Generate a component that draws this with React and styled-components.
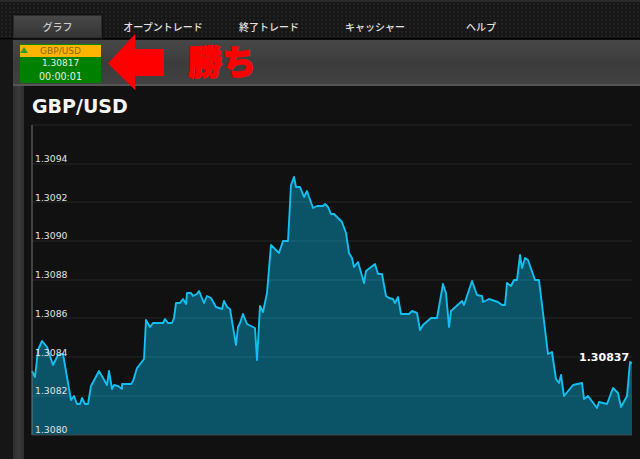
import React from "react";
import styled, { createGlobalStyle } from "styled-components";

const Global = createGlobalStyle`
  html, body { margin: 0; padding: 0; background: #111; }
  body { width: 640px; height: 459px; overflow: hidden; }
`;
const Page = styled.div`
  position: relative; width: 640px; height: 459px; overflow: hidden;
  display: flex; flex-direction: column; background: #111;
  font-family: "DejaVu Sans", sans-serif;
`;
const TopBar = styled.nav`
  height: 38px; box-sizing: border-box; padding: 15px 0 0 13px; display: flex; align-items: stretch;
  border-top: 2px solid #2a2a2a;
  background-color: #171717;
  background-image: radial-gradient(#232323 1px, transparent 1.2px);
  background-size: 4px 4px;
  border-bottom: 1px solid #000;
  margin-bottom: 1px;
  height: 39px;
`;
const Tab = styled.div`
  width: ${p => p.$w}px; margin-right: ${p => p.$gap || 0}px; flex: none; display: flex; align-items: center; justify-content: center;
  font: 500 10px "Noto Sans CJK JP", sans-serif; color: ${p => (p.$active ? "#ccc" : "#e2e2e2")};
  height: 23px; margin-top: -2px;
  ${p => p.$active && `
    background: linear-gradient(#484848, #343434);
    box-shadow: inset 0 0 0 1px #2b2b2b, 0 0 0 1px #111;
  `}
`;
const Main = styled.div`flex: 1; display: flex; min-height: 0;`;
const Gutter = styled.div`width: 13px; flex: none; background: #161616;`;
const Content = styled.div`flex: 1; display: flex; flex-direction: column; min-width: 0;`;
const Band = styled.div`
  height: 46px; flex: none; box-sizing: border-box; padding: 4px 0 0 7px; display: flex; align-items: flex-start;
  background: linear-gradient(#474747, #3c3c3c 55%, #414141);
  border-bottom: 2px solid #555;
`;
const Card = styled.div`width: 81px; flex: none; height: 39px; display: flex; flex-direction: column; background: #008000; border-top: 1px solid #0a8a0a; box-sizing: border-box;`;
const CardHead = styled.div`
  position: relative; height: 12px; background: #ffb400; color: #8a6a10; font-size: 9px; line-height: 13px; text-align: center;
`;
const UpMark = styled.span`
  position: absolute; left: 0; top: 2px; width: 0; height: 0;
  border-left: 4px solid transparent; border-right: 4px solid transparent; border-bottom: 6px solid #2f9f2f;
`;
const CardLine = styled.div`
  height: 13px; color: #e4efe4; font-size: ${p => p.$big ? 9.6 : 9}px; line-height: 13px; text-align: center;
`;
const Arrow = styled.svg`
  width: 56px; height: 56px; flex: none; margin: -10px 0 0 7px; position: relative; z-index: 2;
`;
const WinText = styled.div`
  margin: -4px 0 0 24px; font: 900 34px/42px "Noto Sans CJK JP", sans-serif; color: #f00;
  -webkit-text-stroke: 1.2px #f00; white-space: nowrap;
`;
const Body = styled.div`flex: 1; display: flex; min-height: 0;`;
const Strip = styled.div`width: 11px; flex: none; background: linear-gradient(90deg, #2c2c2c, #3a3a3a 50%, #2e2e2e);`;
const ChartPane = styled.div`flex: 1; display: flex; flex-direction: column; padding-left: 7px; min-width: 0;`;
const Title = styled.h1`
  margin: 0; height: 34px; font: 700 19px/40px "DejaVu Sans", sans-serif; color: #f4f4f4; padding-left: 1px; white-space: nowrap;
`;
const Chart = styled.svg`display: block; width: 609px; height: 339px; flex: none;`;
const AxisLabel = styled.text`font: 9.3px "DejaVu Sans", sans-serif; fill: #e2e2e2;`;
const LastPrice = styled.text`font: 700 11px "DejaVu Sans", sans-serif; fill: #fff;`;

const TABS = [["グラフ", 89, 8, true], ["オープントレード", 106], ["終了トレード", 106], ["キャッシャー", 106], ["ヘルプ", 106]];
const pts = [[32,371],[35,377],[38,350],[42,341],[47,347],[53,365],[58,355],[63,354],[71,400],[74,396],[77,404],[80,404],[82,398],[85,404],[88,404],[91,386],[99,371],[107,385],[109,371],[112,389],[114,385],[118,386],[122,389],[122,384],[131,384],[133,381],[137,368],[144,359],[146,320],[150,327],[153,323],[163,323],[165,319],[168,323],[172,323],[174,318],[176,303],[180,303],[183,299],[186,304],[187,293],[191,293],[193,296],[197,294],[199,291],[204,303],[207,296],[211,298],[216,307],[222,309],[224,301],[227,307],[230,309],[236,345],[238,327],[240,323],[243,314],[247,324],[255,328],[257,360],[260,306],[263,312],[267,293],[271,245],[279,253],[283,241],[288,241],[291,185],[294,177],[296,187],[300,187],[304,197],[307,191],[313,208],[317,206],[323,206],[325,204],[328,207],[331,214],[334,214],[342,222],[346,233],[349,253],[352,258],[354,267],[358,262],[364,283],[366,271],[375,264],[378,274],[382,274],[386,296],[389,298],[393,299],[395,303],[398,297],[401,314],[409,314],[412,311],[417,313],[420,330],[423,325],[431,318],[437,318],[443,284],[446,293],[449,327],[451,311],[462,301],[464,305],[472,281],[477,295],[482,296],[483,302],[489,299],[498,302],[502,305],[505,305],[507,283],[511,286],[514,280],[517,280],[520,255],[522,268],[525,258],[528,260],[535,280],[539,280],[548,354],[552,352],[556,379],[559,383],[561,375],[564,396],[573,385],[582,383],[584,399],[588,396],[597,408],[599,402],[607,404],[613,388],[618,393],[621,407],[627,396],[630,362],[632,363]];
const line = pts.map(p => p.join(",")).join(" ");
const area = `32,435 ${line} 632,435`;
const GRID = [164, 202, 241, 280, 318, 357, 396];
const LABELS = [["1.3094",162],["1.3092",201],["1.3090",239],["1.3088",278],["1.3086",317],["1.3084",356],["1.3082",394],["1.3080",433]];

export default function App() {
  return (
    <Page>
      <Global />
      <TopBar>
        {TABS.map(([t, w, g, a]) => <Tab key={t} $w={w} $gap={g} $active={a}>{t}</Tab>)}
      </TopBar>
      <Main>
        <Gutter />
        <Content>
          <Band>
            <Card>
              <CardHead><UpMark />GBP/USD</CardHead>
              <CardLine>1.30817</CardLine>
              <CardLine $big>00:00:01</CardLine>
            </Card>
            <Arrow viewBox="0 0 56 56"><path d="M0 29.5 L27 0 V15 H56 V42 H27 V56 Z" fill="#f00" /></Arrow>
            <WinText>勝ち</WinText>
          </Band>
          <Body>
            <Strip />
            <ChartPane>
              <Title>GBP/USD</Title>
              <Chart viewBox="31 120 609 339">
                <line x1="32" x2="632" y1="125" y2="125" stroke="#262626" />
                <polygon points={area} fill="#0b5468" />
                {GRID.map(y => <line key={y} x1="32" x2="632" y1={y} y2={y} stroke="#fff" strokeOpacity=".09" />)}
                <polyline points={line} fill="none" stroke="#12bff0" strokeWidth="1.9" strokeLinejoin="round" />
                <line x1="32" x2="32" y1="125" y2="435" stroke="#777" />
                <line x1="32" x2="632" y1="435" y2="435" stroke="#444" />
                {LABELS.map(([t, y]) => <AxisLabel key={t} x="35" y={y}>{t}</AxisLabel>)}
                <LastPrice x="579" y="361">1.30837</LastPrice>
              </Chart>
            </ChartPane>
          </Body>
        </Content>
      </Main>
    </Page>
  );
}
